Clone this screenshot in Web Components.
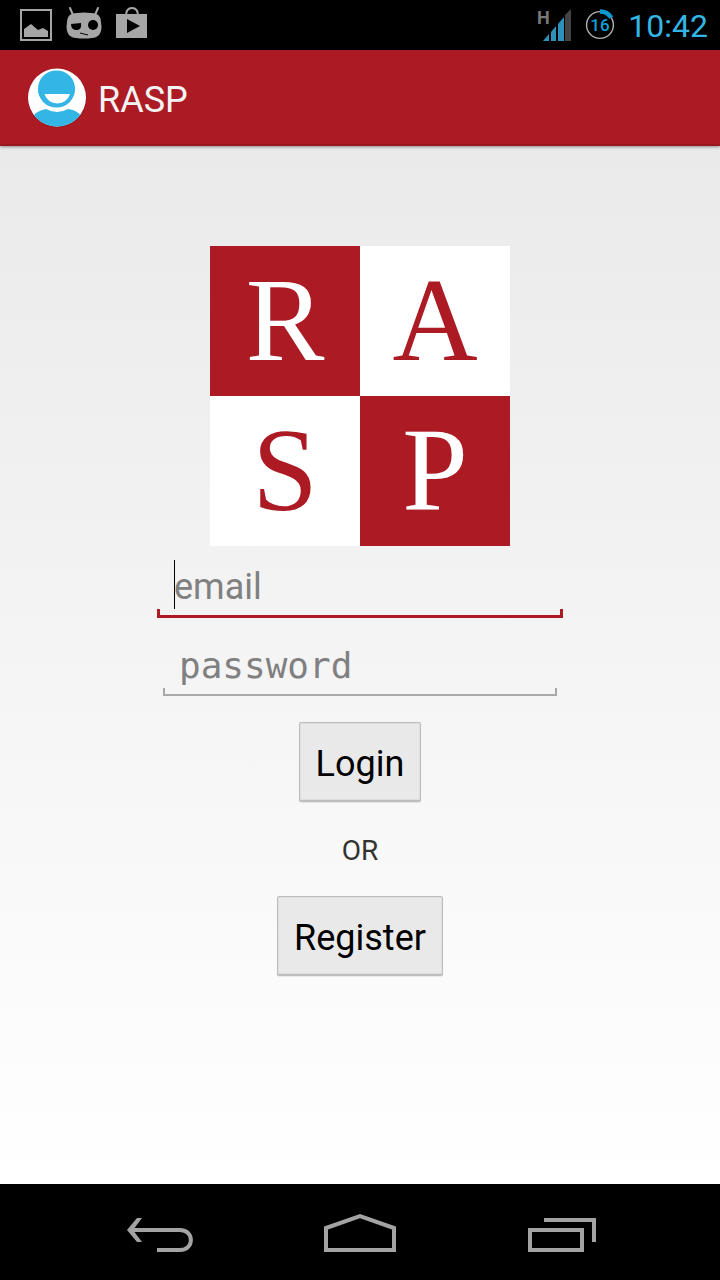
<!DOCTYPE html>
<html lang="en">
<head>
<meta charset="utf-8">
<meta name="viewport" content="width=device-width, initial-scale=1">
<title>RASP</title>
<style>
html, body { margin: 0; }
body { font-family: Roboto, "Noto Sans", sans-serif; background: #000; }
</style>
</head>
<body>
<rasp-app></rasp-app>
<script>
function define(name, html, setup) {
  const template = document.createElement('template');
  template.innerHTML = html;
  customElements.define(name, class extends HTMLElement {
    constructor() {
      super();
      this.attachShadow({ mode: 'open' }).append(template.content.cloneNode(true));
    }
    connectedCallback() { if (setup) setup(this, this.shadowRoot); }
  });
}

define('status-bar', `
<style>
:host { display: flex; justify-content: space-between; align-items: center; height: 50px; padding: 0 12px 0 18px; background: #000; color: #33b5e5; }
div { display: flex; align-items: center; gap: 12px; }
svg { display: block; }
time { font-size: 32px; line-height: 50px; padding-top: 2px; }
</style>
<div>
  <svg width="36" height="50" viewBox="18 0 36 50" role="img" aria-label="Screenshot saved"><path fill="none" stroke="#a6a6a6" stroke-width="2" d="M21 10h30v30H21z"/><path fill="#a6a6a6" d="M24 37v-8l7-5 7 6 5-2 5 3v6z"/></svg>
  <svg width="36" height="50" viewBox="66 0 36 50" role="img" aria-label="CyanogenMod"><path stroke="#a6a6a6" stroke-width="2" stroke-linecap="round" d="M70 8l3 7M98 8l-3 7"/><path fill="#a6a6a6" d="M67 22q0-9 10-9q7-1 14 0q10 0 10 9q1 5 0 9q-2 7-9 7q-8 1-16 0q-7 0-9-7q-1-4 0-9z"/><path fill="#000" d="M71 24l10-1q1 7-4 7q-6 0-6-6z"/><circle cx="93" cy="25" r="5"/><path stroke="#000" d="M80 33l8 2"/></svg>
  <svg width="34" height="50" viewBox="114 0 34 50" role="img" aria-label="Play Store"><path fill="none" stroke="#a6a6a6" stroke-width="2" d="M126 16q0-8 6-8t6 8"/><path fill="#a6a6a6" d="M116 14h31v24h-31z"/><path d="M127 19v14l13-7z"/></svg>
</div>
<div>
  <svg width="36" height="50" viewBox="536 0 36 50" role="img" aria-label="H signal"><text x="537" y="24" font-family="Roboto" font-weight="700" font-size="18" fill="#777">H</text><path fill="#2d91b9" d="M543 41l6-7v7zM551 32l5-6v15h-5zM558 24l6-7v24h-6z"/><path fill="#444" d="M565 15l6-6v32h-6z"/></svg>
  <svg width="32" height="50" viewBox="584 0 32 50" role="img" aria-label="Battery 16%"><circle cx="600" cy="25" r="13.4" fill="none" stroke="#b0b0b0" stroke-width="1.4"/><path fill="none" stroke="#0b9bd2" stroke-width="4.5" d="M600 11.4a13.6 13.6 0 0 1 11.4 6.2"/><text x="600" y="31" text-anchor="middle" font-family="Roboto" font-size="17" font-weight="500" fill="#13a0d8">16</text></svg>
  <time>10:42</time>
</div>`);

define('action-bar', `
<style>
:host { display: flex; align-items: center; gap: 10px; height: 96px; padding: 0 26px; box-sizing: border-box; background: #ac1a24; border-bottom: 2px solid #9b1720; box-shadow: 0 1px 3px #0006; color: #f3f3f3; position: relative; }
svg { display: block; }
h1 { margin: 0; font-size: 36px; font-weight: 400; line-height: 42px; padding-top: 6px; }
</style>
<svg width="62" height="62" viewBox="26 66 62 62" aria-hidden="true">
  <defs><clipPath id="disc"><circle cx="57" cy="97.5" r="29"/></clipPath></defs>
  <circle cx="57" cy="98" r="29.4" fill="#701820" opacity=".6"/>
  <circle cx="57" cy="97.5" r="29" fill="#fff"/>
  <g clip-path="url(#disc)" fill="#33b5e5"><path d="M28 122q8-12 18-13q11 6 22 0q11 1 19 13v8H28z"/></g>
  <circle cx="56.5" cy="89" r="18.6" fill="#33b5e5"/>
  <path fill="#fff" d="M44.500 94h25.500q-3 9-12.700 9.500q-9.800-.5-12.800-9.500z"/>
</svg>
<h1><slot></slot></h1>`);

define('rasp-logo', `
<style>
:host { display: grid; grid-template-columns: 150px 150px; grid-auto-rows: 150px; font-family: "Liberation Serif", serif; font-size: 118px; line-height: 150px; text-align: center; }
.red { background: #ac1a24; color: #fff; }
.white { background: #fff; color: #ac1a24; }
</style>
<span class="red">R</span><span class="white">A</span><span class="white">S</span><span class="red">P</span>`);

define('text-field', `
<style>
:host { --line: #a9a9a9; --thick: 2px; --side: 8px; --inset: 16px; display: block; position: relative; margin: 0 6px; }
:host([active]) { --line: #ac1a24; --thick: 3px; --side: 9px; --inset: 17px; margin: 0; }
input { display: block; width: 100%; height: 60px; box-sizing: border-box; border: 0; border-radius: 0; outline: 0; padding: 0 var(--inset) 2px; font: 36px/48px Roboto, sans-serif; color: #000;
  background:
    linear-gradient(var(--line), var(--line)) left bottom / 100% var(--thick) no-repeat,
    linear-gradient(var(--line), var(--line)) left bottom / var(--thick) var(--side) no-repeat,
    linear-gradient(var(--line), var(--line)) right bottom / var(--thick) var(--side) no-repeat; }
input[type=password] { font-family: "DejaVu Sans Mono", monospace; }
input::placeholder { color: #808080; opacity: 1; }
i { display: none; position: absolute; left: 17px; bottom: 9px; width: 1px; height: 49px; background: #000; }
:host([active]) i { display: block; }
</style>
<input><i></i>`, (host, root) => {
  const input = root.querySelector('input');
  input.type = host.getAttribute('type');
  input.placeholder = host.getAttribute('label');
  input.setAttribute('aria-label', host.getAttribute('label'));
});

define('holo-button', `
<style>
:host { display: block; }
button { display: block; height: 80px; padding: 4px 16px 0; box-sizing: border-box; border: 1px solid #bdbdbd; border-width: 1px 1px 2px; border-radius: 2px; background: #e9e9e9; box-shadow: inset 0 0 0 1px #dedede, 0 1px 1px #0001; font: 36px/42px Roboto, sans-serif; color: #000; }
</style>
<button type="button"><slot></slot></button>`);

define('login-form', `
<style>
:host { display: flex; flex-direction: column; align-items: center; flex: 1; padding: 100px 16px 32px; background: linear-gradient(#eaeaea, #fff); }
.fields { display: flex; flex-direction: column; gap: 18px; width: 100%; max-width: 406px; margin: 12px 0 26px; }
p { margin: 33px 0 29px; font-size: 28px; line-height: 32px; color: #333; }
</style>
<rasp-logo></rasp-logo>
<div class="fields">
  <text-field type="email" label="email" active></text-field>
  <text-field type="password" label="password"></text-field>
</div>
<holo-button>Login</holo-button>
<p>OR</p>
<holo-button>Register</holo-button>`);

define('navigation-bar', `
<style>
:host { display: flex; justify-content: center; gap: 60px; height: 96px; background: #000; }
button { display: block; border: 0; padding: 0; background: none; width: 140px; height: 96px; }
svg { display: block; fill: none; stroke: #a3a3a3; stroke-width: 4; }
</style>
<button type="button" aria-label="Back"><svg width="140" height="96" viewBox="90 1184 140 96"><path d="M131 1230h49c14.500 0 14.500 20 0 20h-23"/><path fill="#a3a3a3" stroke="none" d="M127 1230l10-12h5l-9 12 9 12h-5z"/></svg></button>
<button type="button" aria-label="Home"><svg width="140" height="96" viewBox="290 1184 140 96"><path d="M326 1250v-22l34-12 34 12v22z"/></svg></button>
<button type="button" aria-label="Recent apps"><svg width="140" height="96" viewBox="490 1184 140 96"><path d="M530 1230h52v20h-52zM544 1220h50v22"/></svg></button>`);

define('rasp-app', `
<style>
:host { display: flex; flex-direction: column; min-height: 100vh; }
</style>
<status-bar></status-bar>
<action-bar>RASP</action-bar>
<login-form></login-form>
<navigation-bar></navigation-bar>`);
</script>
</body>
</html>
